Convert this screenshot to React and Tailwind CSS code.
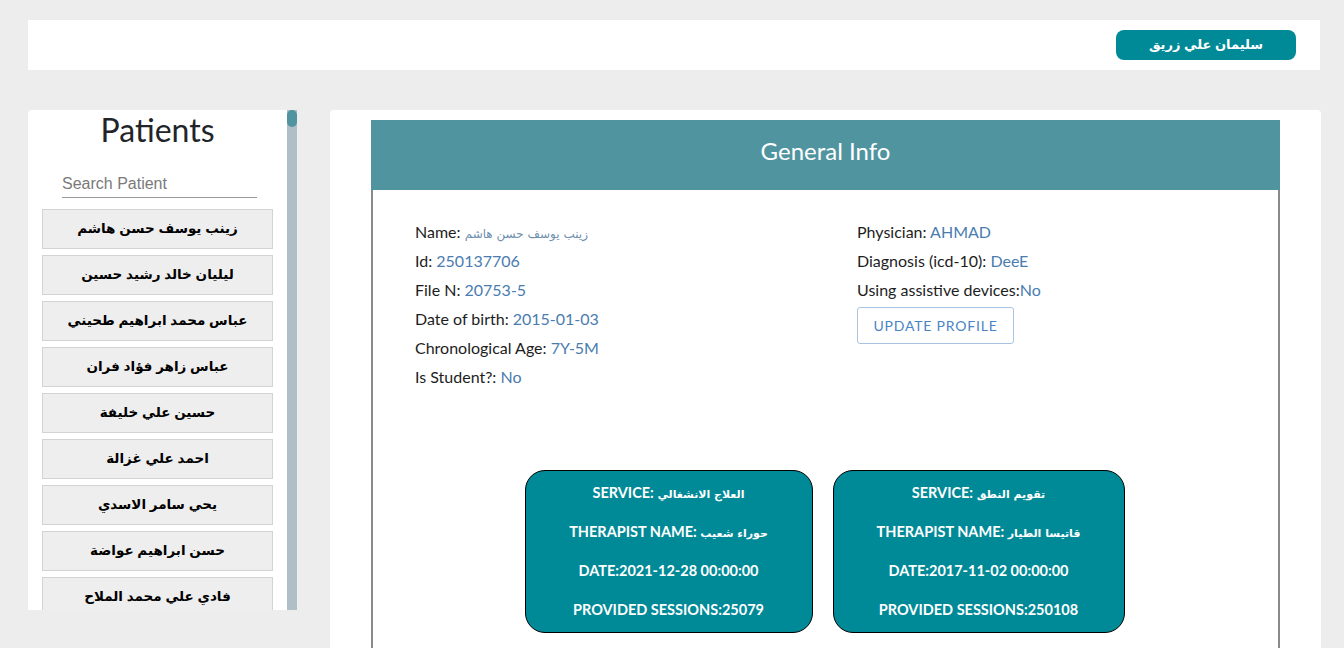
const patients = [
  'زينب يوسف حسن هاشم',
  'ليليان خالد رشيد حسين',
  'عباس محمد ابراهيم طحيني',
  'عباس زاهر فؤاد فران',
  'حسين علي خليفة',
  'احمد علي غزالة',
  'يحي سامر الاسدي',
  'حسن ابراهيم عواضة',
  'فادي علي محمد الملاح',
];

const leftInfo = [
  ['Name: ', 'زينب يوسف حسن هاشم', true],
  ['Id: ', '250137706'],
  ['File N: ', '20753-5'],
  ['Date of birth: ', '2015-01-03'],
  ['Chronological Age: ', '7Y-5M'],
  ['Is Student?: ', 'No'],
];

const rightInfo = [
  ['Physician: ', 'AHMAD'],
  ['Diagnosis (icd-10): ', 'DeeE'],
  ['Using assistive devices:', 'No'],
];

const services = [
  {
    service: 'العلاج الانشغالي',
    therapist: 'حوراء شعيب',
    date: '2021-12-28 00:00:00',
    sessions: '25079',
    width: 'w-[288px]',
  },
  {
    service: 'تقويم النطق',
    therapist: 'قاتيسا الطيار',
    date: '2017-11-02 00:00:00',
    sessions: '250108',
    width: 'w-[292px]',
  },
];

const InfoRow = ({ label, value, arabic }) => (
  <div className="h-[29px] leading-[29px] text-[16px] text-[#1d1d1d] whitespace-pre">
    {label}
    <span
      className={
        arabic
          ? "text-[12px] text-[#6f8fb0] font-['DejaVu_Sans',sans-serif]"
          : 'text-[#4a7cb0]'
      }
    >
      {value}
    </span>
  </div>
);

const ServiceCard = ({ s }) => (
  <div
    className={`${s.width} h-[163px] bg-[#008996] border border-black rounded-[20px] pt-[2px] text-white font-bold text-[14.5px] text-center`}
  >
    <div className="h-[39px] leading-[39px] whitespace-pre">
      SERVICE: <span className="text-[11px] leading-none font-['DejaVu_Sans',sans-serif]">{s.service}</span>
    </div>
    <div className="h-[39px] leading-[39px] whitespace-pre">
      THERAPIST NAME: <span className="text-[11px] leading-none font-['DejaVu_Sans',sans-serif]">{s.therapist}</span>
    </div>
    <div className="h-[39px] leading-[39px]">DATE:{s.date}</div>
    <div className="h-[39px] leading-[39px]">PROVIDED SESSIONS:{s.sessions}</div>
  </div>
);

export default function App() {
  return (
    <div className="h-[648px] overflow-hidden bg-[#ededed] font-['Lato',sans-serif]">
      {/* top bar */}
      <div className="ml-[28px] mt-[20px] w-[1292px] h-[50px] bg-white flex items-center justify-end pr-[24px]">
        <button className="w-[180px] h-[30px] rounded-lg bg-[#008996] text-white font-bold text-[13px] font-['Liberation_Sans','DejaVu_Sans',sans-serif]">
          سليمان علي زريق
        </button>
      </div>

      <div className="flex mt-[40px] ml-[28px] gap-[32px] items-start">
        {/* sidebar */}
        <div className="flex h-[500px] w-[270px]">
          <div className="w-[259px] bg-white rounded-tl overflow-hidden">
            <h1 className="text-[32px] leading-[40px] text-center text-[#212529]">Patients</h1>
            <div className="mt-[20px] ml-[34px] w-[195px] h-[28px] border-b border-[#999] flex items-center">
              <span className="text-[16px] text-[#7a7a7a] font-['Liberation_Sans',sans-serif]">
                Search Patient
              </span>
            </div>
            <div className="mt-[11px] px-[14px] flex flex-col gap-[6px]">
              {patients.map((p) => (
                <div
                  key={p}
                  className="h-[40px] shrink-0 bg-[#eeeeee] border border-[#d3d3d3] flex items-center justify-center text-[13.5px] font-bold text-black font-['Liberation_Sans','DejaVu_Sans',sans-serif]"
                >
                  {p}
                </div>
              ))}
            </div>
          </div>
          <div className="w-[10px] bg-[#b0bec5] flex flex-col">
            <div className="h-[17px] rounded-full bg-[#5094a0]"></div>
          </div>
        </div>

        {/* main panel */}
        <div className="w-[991px] h-[560px] bg-white rounded pt-[10px] px-[41px]">
          <div className="h-full border-x-2 border-[#8a8a8a]">
            <div className="-mx-[2px] h-[70px] pb-[8px] bg-[#5094a0] flex items-center justify-center text-white text-[24px]">
              General Info
            </div>
            <div className="pt-[27px] pl-[42px] grid grid-cols-[442px_1fr]">
              <div>
                {leftInfo.map(([l, v, a]) => (
                  <InfoRow key={l} label={l} value={v} arabic={a} />
                ))}
              </div>
              <div>
                {rightInfo.map(([l, v]) => (
                  <InfoRow key={l} label={l} value={v} />
                ))}
                <button className="mt-[3px] w-[157px] h-[37px] border border-[#a9c3e3] rounded-[3px] text-[#4a84c4] text-[14px] tracking-[0.8px]">
                  UPDATE PROFILE
                </button>
              </div>
            </div>
            <div className="mt-[79px] flex justify-center gap-[20px] -translate-x-[1px]">
              {services.map((s) => (
                <ServiceCard key={s.sessions} s={s} />
              ))}
            </div>
          </div>
        </div>
      </div>
    </div>
  );
}
